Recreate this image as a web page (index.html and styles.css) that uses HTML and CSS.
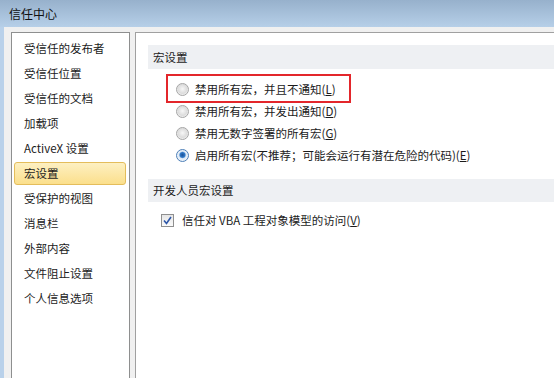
FILE: index.html
```html
<!DOCTYPE html>
<html>
<head>
    <meta charset="UTF-8">
    <title>信任中心</title>
    <link rel="stylesheet" href="styles.css">
</head>
<body>

<div class="titlebar">信任中心</div>

<div class="client">
    <!-- Left navigation -->
    <ul class="nav">
        <li>受信任的发布者</li>
        <li>受信任位置</li>
        <li>受信任的文档</li>
        <li>加载项</li>
        <li>ActiveX 设置</li>
        <li class="active">宏设置</li>
        <li>受保护的视图</li>
        <li>消息栏</li>
        <li>外部内容</li>
        <li>文件阻止设置</li>
        <li>个人信息选项</li>
    </ul>

    <!-- Settings panel -->
    <div class="panel">
        <div class="section-title">宏设置</div>
        <div class="options">
            <label class="option marked"><span class="radio"></span><span>禁用所有宏，并且不通知(<u>L</u>)</span></label>
            <label class="option"><span class="radio"></span><span>禁用所有宏，并发出通知(<u>D</u>)</span></label>
            <label class="option"><span class="radio"></span><span>禁用无数字签署的所有宏(<u>G</u>)</span></label>
            <label class="option"><span class="radio checked"></span><span>启用所有宏(不推荐；可能会运行有潜在危险的代码)(<u>E</u>)</span></label>
        </div>

        <div class="section-title second">开发人员宏设置</div>
        <label class="option check-row">
            <span class="checkbox">
                <svg width="9" height="9" viewBox="0 0 9 9"><path d="M1 4.5 L3.5 7.5 L8 1" fill="none" stroke="#2d56a8" stroke-width="1.6"/></svg>
            </span><span>信任对 VBA 工程对象模型的访问(<u>V</u>)</span>
        </label>
    </div>
</div>

</body>
</html>
```

FILE: styles.css
```css
body {
    margin: 0;
    width: 554px;
    height: 378px;
    overflow: hidden;
    background: #b9d1ea;
    font-family: "Noto Sans CJK SC", "Noto Sans", sans-serif;
    font-size: 11.5px;
    color: #1b1b1b;
}
.titlebar {
    height: 27px;
    line-height: 27px;
    padding-left: 9px;
    font-size: 12px;
    color: #111;
    background: linear-gradient(#97b1cc, #b6cfe8);
}
.client {
    display: flex;
    margin-left: 4px;
    height: 351px;
    padding: 5px 0 0 7px;
    gap: 5px;
    background: #f0f0f0;
    box-sizing: border-box;
}
.nav {
    list-style: none;
    margin: 0;
    padding: 2px 0 0;
    width: 117px;
    background: #fff;
    border: 1px solid #8e8f8f;
    border-bottom: none;
}
.nav li {
    height: 21px;
    line-height: 21px;
    margin: 2px 3px 2px 2px;
    padding-left: 9px;
    border: 1px solid transparent;
    border-radius: 3px;
    white-space: nowrap;
}
.nav li.active {
    background: linear-gradient(#fdf0c2, #fbdf8c);
    border-color: #e4bd5b;
}
.panel {
    flex: 1;
    background: #fff;
    border-top: 1px solid #a0a0a0;
    border-left: 1px solid #a0a0a0;
    padding-top: 12px;
}
.section-title {
    margin-left: 12px;
    height: 24px;
    line-height: 24px;
    padding-left: 5px;
    background: #eef0f3;
}
.section-title.second {
    margin-top: 13px;
    height: 23px;
    line-height: 23px;
}
.options {
    margin-top: 9px;
}
.option {
    display: flex;
    align-items: center;
    height: 22px;
    padding-left: 40px;
    gap: 6px;
    white-space: nowrap;
    position: relative;
}
.option.marked::after {
    content: "";
    position: absolute;
    left: 30px;
    top: -4px;
    width: 181px;
    height: 25px;
    border: 2px solid #e3262b;
}
.radio {
    width: 11px;
    height: 11px;
    border-radius: 50%;
    border: 1px solid #a5a5a5;
    background: radial-gradient(circle at 50% 45%, #f7f7f7 0, #dcdcdc 55%, #f4f4f4 75%);
    flex: none;
}
.radio.checked {
    border-color: #4d7fb8;
    background: radial-gradient(circle at 50% 45%, #1c4f94 0, #2f79c8 30%, #dfeaf6 45%, #f2f6fb 80%);
}
.check-row {
    margin-top: 7px;
    padding-left: 25px;
    gap: 8px;
}
.checkbox {
    width: 11px;
    height: 11px;
    border: 1px solid #8f8f8f;
    background: linear-gradient(#e6e6e6, #fafafa);
    display: flex;
    align-items: center;
    justify-content: center;
    flex: none;
}
```
